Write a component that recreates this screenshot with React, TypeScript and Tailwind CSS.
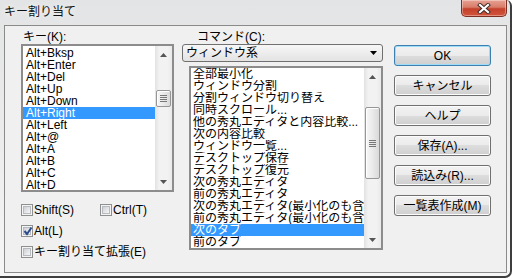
import * as React from 'react';

const keys = [
  'Alt+Bksp',
  'Alt+Enter',
  'Alt+Del',
  'Alt+Up',
  'Alt+Down',
  'Alt+Right',
  'Alt+Left',
  'Alt+@',
  'Alt+A',
  'Alt+B',
  'Alt+C',
  'Alt+D',
];

const commands = [
  '全部最小化',
  'ウィンドウ分割',
  '分割ウィンドウ切り替え',
  '同時スクロール...',
  '他の秀丸エディタと内容比較...',
  '次の内容比較',
  'ウィンドウ一覧...',
  'デスクトップ保存',
  'デスクトップ復元',
  '次の秀丸エディタ',
  '前の秀丸エディタ',
  '次の秀丸エディタ(最小化のも含む)',
  '前の秀丸エディタ(最小化のも含む)',
  '次のタブ',
  '前のタブ',
];

const buttons = ['OK', 'キャンセル', 'ヘルプ', '保存(A)...', '読込み(R)...', '一覧表作成(M)'];

const Arrow = ({ down }: { down?: boolean }) => (
  <svg width="7" height="4" viewBox="0 0 7 4">
    <path d={down ? 'M0 0 L7 0 L3.5 4 Z' : 'M3.5 0 L7 4 L0 4 Z'} fill="#555" />
  </svg>
);

// thumb = margin + height classes, written out in full by the caller
const ScrollBar = ({ thumb }: { thumb: string }) => (
  <div className="flex flex-col w-[17px] bg-[linear-gradient(to_right,#e2e2e2,#f2f2f2_25%,#f2f2f2_75%,#e9e9e9)]">
    <div className="h-[17px] flex items-center justify-center">
      <Arrow />
    </div>
    <div className="flex-1 flex flex-col">
      <div
        className={`${thumb} mx-[1px] rounded-[2px] border border-[#969696] bg-[linear-gradient(to_right,#f7f7f7,#eaeaea_50%,#d9d9d9)] shadow-[inset_1px_1px_0_#ffffff] flex flex-col items-center justify-center gap-[1px]`}
      >
        <div className="w-[7px] h-[1px] bg-[#777]" />
        <div className="w-[7px] h-[1px] bg-[#777]" />
        <div className="w-[7px] h-[1px] bg-[#777]" />
        <div className="w-[7px] h-[1px] bg-[#777]" />
      </div>
    </div>
    <div className="h-[17px] flex items-center justify-center">
      <Arrow down />
    </div>
  </div>
);

const Check = ({ label, checked }: { label: string; checked?: boolean }) => (
  <div className="flex items-center gap-[1px] h-[16px] leading-[16px]">
    <div className="relative w-[12px] h-[12px] border border-[#8e8f8f] bg-[#f4f4f4] p-[1px]">
      <div className="w-full h-full border border-[#b7bbc0] bg-linear-to-br from-[#cdd0d4] to-[#f7f7f7]" />
      {checked && (
        <svg className="absolute left-[1px] top-[0px]" width="10" height="10" viewBox="0 0 10 10">
          <path d="M1.5 5 L4 8 L8.5 1.5" fill="none" stroke="#2a4b8d" strokeWidth="2" />
        </svg>
      )}
    </div>
    <span className="whitespace-nowrap">{label}</span>
  </div>
);

const App: React.FC = () => {
  return (
    <div className="w-[515px] h-[280px] bg-white overflow-hidden font-['Liberation_Sans','Noto_Sans_CJK_JP',sans-serif] text-[12px] text-black">
      <div className="w-[512px] h-[278px] border-r-2 border-b-2 border-[#3e3e3e] rounded-br-[7px] rounded-tr-[6px] bg-linear-to-b from-[#e3e4e5] via-[#ececec] to-[#f6f6f6]">
        {/* Title bar */}
        <div className="h-[25px] flex items-start">
          <div className="pl-[4px] pt-[5px] leading-[14px] text-[12px] text-[#111] [text-shadow:0_0_6px_#ffffff]">
            キー割り当て
          </div>
          <div className="ml-auto mr-[3px] w-[46px] h-[17px] flex items-center justify-center rounded-b-[5px] border border-t-0 border-[#7e2f24] bg-[linear-gradient(to_bottom,#e6a293_0%,#d87c68_45%,#c4412c_55%,#d2553b_100%)] shadow-[inset_0_0_0_1px_rgba(255,255,255,0.35)]">
            <svg width="14" height="11" viewBox="0 0 14 11">
              <path d="M3 2 L11 9 M11 2 L3 9" stroke="#3b2a28" strokeWidth="4" strokeLinecap="square" />
              <path d="M3 2 L11 9 M11 2 L3 9" stroke="#ffffff" strokeWidth="2.2" strokeLinecap="square" />
            </svg>
          </div>
        </div>

        {/* Client area */}
        <div className="ml-[4px] w-[503px] h-[248px] border border-[#8a8a8a] bg-[#f0f0f0] flex items-start">
          {/* Keys */}
          <div className="ml-[16px] mt-[4px] w-[153px] flex flex-col">
            <div className="h-[14px] leading-[14px] pl-[2px]">キー(K):</div>
            <div className="flex h-[148px] border-2 border-[#8c8c8c] bg-white">
              <div className="flex-1 pt-[1px] overflow-hidden">
                {keys.map((k, i) => (
                  <div
                    key={k}
                    className={`h-[12px] leading-[12px] pl-[3px] whitespace-nowrap ${
                      i === 5 ? 'bg-[#3399ff] text-white' : ''
                    }`}
                  >
                    {k}
                  </div>
                ))}
              </div>
              <ScrollBar thumb="mt-[27px] h-[17px]" />
            </div>
            <div className="mt-[10px] flex">
              <div className="w-[79px]">
                <Check label="Shift(S)" />
              </div>
              <Check label="Ctrl(T)" />
            </div>
            <div className="mt-[5px]">
              <Check label="Alt(L)" checked />
            </div>
            <div className="mt-[5px]">
              <Check label="キー割り当て拡張(E)" />
            </div>
          </div>

          {/* Commands */}
          <div className="ml-[8px] mt-[4px] w-[201px] flex flex-col">
            <div className="h-[14px] leading-[14px] pl-[15px]">コマンド(C):</div>
            <div className="h-[18px] flex items-center justify-between pl-[3px] pr-[5px] rounded-[3px] border border-[#707070] bg-linear-to-b from-[#f7f7f7] to-[#e3e3e3] leading-[14px]">
              <span>ウィンドウ系</span>
              <svg width="7" height="4" viewBox="0 0 7 4">
                <path d="M0 0 L7 0 L3.5 4 Z" fill="#000" />
              </svg>
            </div>
            <div className="ml-[7px] mt-[4px] flex h-[184px] border-2 border-[#8c8c8c] bg-white">
              <div className="flex-1 overflow-hidden">
                {commands.map((c, i) => (
                  <div
                    key={c}
                    className={`h-[12px] leading-[12px] pl-[2px] whitespace-nowrap overflow-hidden ${
                      i === 13 ? 'bg-[#3399ff] text-white' : ''
                    }`}
                  >
                    {c}
                  </div>
                ))}
              </div>
              <ScrollBar thumb="mt-[22px] h-[72px]" />
            </div>
          </div>

          {/* Buttons */}
          <div className="ml-[11px] mt-[19px] flex flex-col gap-[9px]">
            {buttons.map((b, i) => (
              <div
                key={b}
                className={`w-[97px] h-[21px] flex items-center justify-center rounded-[3px] border leading-[14px] bg-[linear-gradient(to_bottom,#f2f2f2_0%,#ebebeb_50%,#dddddd_50%,#cfcfcf_100%)] ${
                  i === 0
                    ? 'border-[#3c7fb1] shadow-[inset_0_0_0_1px_#9fdcf8]'
                    : 'border-[#707070] shadow-[inset_0_0_0_1px_#fcfcfc]'
                }`}
              >
                {b}
              </div>
            ))}
          </div>
        </div>
      </div>
    </div>
  );
};

export default App;
